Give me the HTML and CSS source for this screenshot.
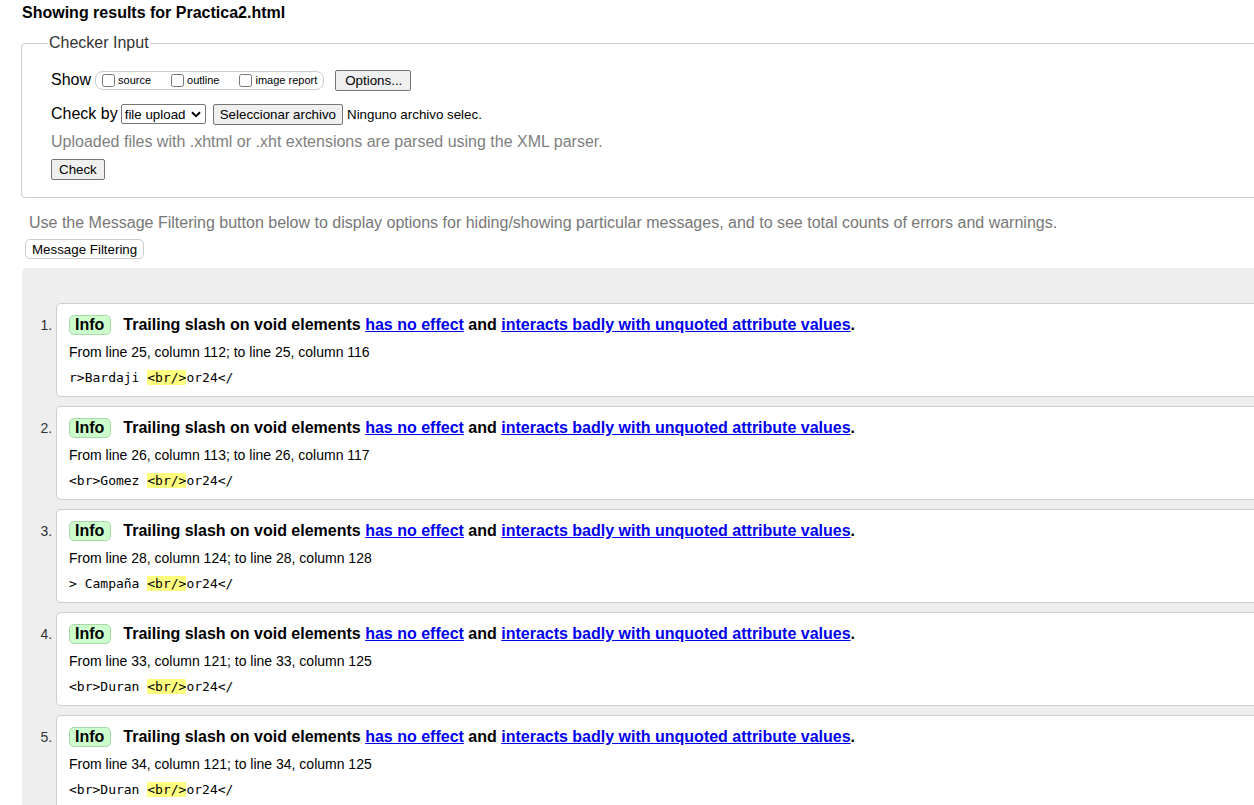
FILE: index.html
```html
<!DOCTYPE html>
<html lang="en">
<head>
<meta charset="utf-8">
<title>Showing results for Practica2.html</title>
<link rel="stylesheet" href="styles.css">
</head>
<body>
<div class="page">
  <h2 class="results-title">Showing results for Practica2.html</h2>

  <fieldset class="checker">
    <legend>Checker Input</legend>
    <div class="row show-row">
      <span class="row-label">Show</span>
      <span class="opt-group">
        <label class="opt"><input type="checkbox"><span>source</span></label>
        <label class="opt"><input type="checkbox"><span>outline</span></label>
        <label class="opt"><input type="checkbox"><span>image report</span></label>
      </span>
      <button class="btn options-btn">Options...</button>
    </div>
    <div class="row checkby-row">
      <span class="row-label">Check by</span>
      <span class="fake-select">file upload
        <svg class="chev" width="10" height="7" viewBox="0 0 10 7"><path d="M1 1.2 L5 5.2 L9 1.2" fill="none" stroke="#000" stroke-width="2"/></svg>
      </span>
      <button class="btn file-btn">Seleccionar archivo</button>
      <span class="file-name">Ninguno archivo selec.</span>
    </div>
    <p class="hint">Uploaded files with .xhtml or .xht extensions are parsed using the XML parser.</p>
    <div class="row">
      <button class="btn check-btn">Check</button>
    </div>
  </fieldset>

  <p class="filter-hint">Use the Message Filtering button below to display options for hiding/showing particular messages, and to see total counts of errors and warnings.</p>
  <button class="filter-btn">Message Filtering</button>

  <div class="results">
    <ol class="messages">
      <li class="msg">
        <div class="msg-head"><span class="badge">Info</span><span class="msg-text">Trailing slash on void elements <a href="#">has no effect</a> and <a href="#">interacts badly with unquoted attribute values</a>.</span></div>
        <p class="loc">From line 25, column 112; to line 25, column 116</p>
        <p class="extract">r&gt;Bardaji <mark>&lt;br/&gt;</mark>or24&lt;/</p>
      </li>
      <li class="msg">
        <div class="msg-head"><span class="badge">Info</span><span class="msg-text">Trailing slash on void elements <a href="#">has no effect</a> and <a href="#">interacts badly with unquoted attribute values</a>.</span></div>
        <p class="loc">From line 26, column 113; to line 26, column 117</p>
        <p class="extract">&lt;br&gt;Gomez <mark>&lt;br/&gt;</mark>or24&lt;/</p>
      </li>
      <li class="msg">
        <div class="msg-head"><span class="badge">Info</span><span class="msg-text">Trailing slash on void elements <a href="#">has no effect</a> and <a href="#">interacts badly with unquoted attribute values</a>.</span></div>
        <p class="loc">From line 28, column 124; to line 28, column 128</p>
        <p class="extract">&gt; Campaña <mark>&lt;br/&gt;</mark>or24&lt;/</p>
      </li>
      <li class="msg">
        <div class="msg-head"><span class="badge">Info</span><span class="msg-text">Trailing slash on void elements <a href="#">has no effect</a> and <a href="#">interacts badly with unquoted attribute values</a>.</span></div>
        <p class="loc">From line 33, column 121; to line 33, column 125</p>
        <p class="extract">&lt;br&gt;Duran <mark>&lt;br/&gt;</mark>or24&lt;/</p>
      </li>
      <li class="msg">
        <div class="msg-head"><span class="badge">Info</span><span class="msg-text">Trailing slash on void elements <a href="#">has no effect</a> and <a href="#">interacts badly with unquoted attribute values</a>.</span></div>
        <p class="loc">From line 34, column 121; to line 34, column 125</p>
        <p class="extract">&lt;br&gt;Duran <mark>&lt;br/&gt;</mark>or24&lt;/</p>
      </li>
    </ol>
  </div>
</div>
</body>
</html>
```

FILE: styles.css
```css
html, body {
  margin: 0;
  padding: 0;
  overflow: hidden;
  background: #fff;
}
body {
  font-family: "Liberation Sans", Arial, sans-serif;
  color: #000;
}
.page {
  width: 1300px;
  padding: 0 0 0 22px;
}
.results-title {
  font-size: 16px;
  font-weight: bold;
  margin: 0;
  padding-top: 4px;
  line-height: 18px;
}
.checker {
  margin: 12px 0 0 -1px;
  border: 1px solid #ccc;
  border-radius: 4px;
  padding: 0 0 17px 29px;
}
.checker legend {
  font-size: 16px;
  color: #333;
  padding: 0 1px;
  margin-left: -3px;
  line-height: 18px;
}
.row {
  display: flex;
  align-items: center;
}
.row-label {
  font-size: 16px;
  margin-right: 4px;
}
.show-row {
  margin-top: 17px;
  height: 22px;
}
.opt-group {
  display: inline-flex;
  align-items: center;
  border: 1px solid #ccc;
  border-radius: 8px;
  height: 17px;
  padding: 0 6px 0 5px;
  margin-right: 11px;
}
.opt {
  display: inline-flex;
  align-items: center;
  font-size: 11px;
  margin-right: 19px;
}
.opt:last-child { margin-right: 0; }
.opt input {
  margin: 0 3px 0 1px;
  width: 13px;
  height: 13px;
}
.btn {
  font-family: "Liberation Sans", Arial, sans-serif;
  font-size: 13.33px;
  background: #efefef;
  border: 1px solid #767676;
  border-radius: 2px;
  color: #000;
  padding: 1px 7px;
  height: 21px;
  line-height: 17px;
}
.options-btn { padding: 1px 8px 1px 9px; }
.checkby-row {
  margin-top: 12px;
  height: 22px;
}
.fake-select {
  display: inline-flex;
  align-items: center;
  justify-content: space-between;
  font-size: 13.33px;
  border: 1px solid #767676;
  border-radius: 2px;
  height: 18px;
  padding: 0 4px 0 3px;
  width: 76px;
  margin-left: -1px;
  margin-right: 7px;
}
.chev { margin-left: 4px; }
.file-btn { margin-right: 4px; padding: 1px 6px; }
.file-name { font-size: 13.33px; }
.hint {
  margin: 8px 0 0;
  font-size: 16px;
  color: #808080;
  line-height: 18px;
}
.check-btn { margin-top: 8px; height: 21px; }

.filter-hint {
  margin: 16px 0 0 7px;
  font-size: 16px;
  color: #777;
  line-height: 18px;
}
.filter-btn {
  display: block;
  margin: 7px 0 0 3px;
  font-family: "Liberation Sans", Arial, sans-serif;
  font-size: 13.33px;
  background: #fff;
  border: 1px solid #ccc;
  border-radius: 5px;
  padding: 0 6px;
  height: 20px;
  line-height: 17px;
  color: #000;
}
.results {
  margin-top: 9px;
  background: #eee;
  border-radius: 4px 0 0 0;
  padding: 35px 0 0 0;
  min-height: 600px;
}
.messages {
  margin: 0;
  padding: 0 0 0 34px;
  font-size: 14px;
}
.msg {
  background: #fff;
  border: 1px solid #ccc;
  border-radius: 5px 0 0 5px;
  padding: 11px 0 10px 12px;
  margin-bottom: 9px;
  height: 71px;
}
.msg::marker {
  font-size: 14px;
  color: #333;
}
.msg-head {
  display: flex;
  align-items: center;
  font-size: 16px;
  font-weight: bold;
  line-height: 20px;
}
.badge {
  background: #ccffcc;
  border: 1px solid #a8d8a8;
  border-radius: 5px;
  padding: 0 6px 0 5px;
  margin-right: 12px;
  line-height: 18px;
}
.msg-text a { color: #00e; }
.loc {
  margin: 9px 0 0;
  font-size: 14px;
  line-height: 17px;
}
.extract {
  margin: 8px 0 0;
  font-family: "DejaVu Sans Mono", monospace;
  font-size: 13px;
  line-height: 17px;
}
.extract mark {
  background: #ffff80;
  color: inherit;
}
```
